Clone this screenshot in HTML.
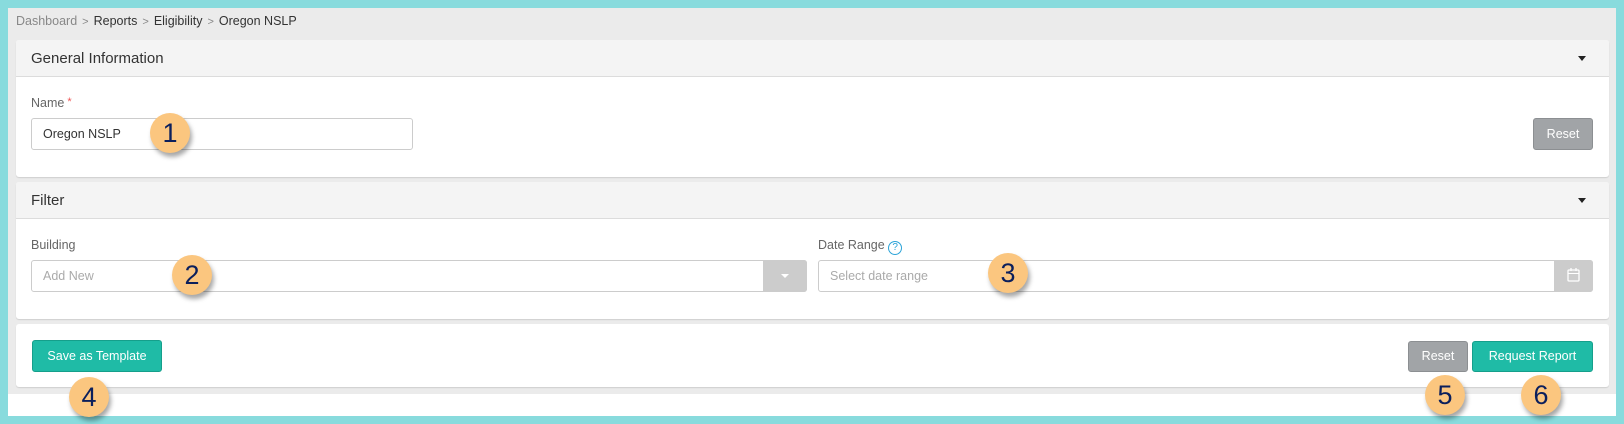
<!DOCTYPE html>
<html><head><style>
*{box-sizing:border-box;margin:0;padding:0}
body{width:1624px;height:424px;background:#88dbdd;font-family:"Liberation Sans",sans-serif;position:relative;overflow:hidden}
.page{position:absolute;left:8px;top:8px;width:1608px;height:408px;background:#fff}
.gray{position:absolute;left:8px;top:8px;width:1608px;height:386px;background:#ebebeb}
.bc{position:absolute;left:16px;top:14px;font-size:12.5px;color:#333}
.bc .d{color:#888}.bc .s{color:#888;margin:0 5px;font-size:11px}
.card{position:absolute;left:16px;width:1593px;background:#fff;border-radius:3px;box-shadow:0 1px 1px rgba(0,0,0,.12)}
.hd{height:37px;background:#f4f4f4;border-bottom:1px solid #dcdcdc;font-size:15px;color:#333;padding:10px 15px;position:relative;border-radius:3px 3px 0 0}
.hd:after{content:"";position:absolute;right:23px;top:16px;border:4px solid transparent;border-top:5px solid #222;border-bottom:0}
.abs{position:absolute}
.lbl{font-size:12.5px;color:#666}
.inp{border:1px solid #ccc;border-radius:3px;background:#fff;height:32px;font-size:12.5px;padding:8px 11px}
.btn{position:absolute;height:31px;border-radius:3px;color:#fff;font-size:12.5px;text-align:center;line-height:29px}
.gr{background:#a1a4a7;border:1px solid #8c8f92}
.tl{background:#1fbba6;border:1px solid #159f8b}
.b{position:absolute;width:40px;height:40px;border-radius:50%;background:#fbc67f;box-shadow:2px 4px 5px rgba(0,0,0,.35);color:#0b1f5c;font-size:27px;text-align:center;line-height:40px}
</style></head><body>
<div class="page"></div><div class="gray"></div>
<div class="bc"><span class="d">Dashboard</span><span class="s">&gt;</span>Reports<span class="s">&gt;</span>Eligibility<span class="s">&gt;</span>Oregon NSLP</div>

<div class="card" style="top:40px;height:137px"><div class="hd">General Information</div></div>
<div class="abs lbl" style="left:31px;top:96px">Name<span style="color:#e55;font-size:11px;vertical-align:top"> *</span></div>
<div class="abs inp" style="left:31px;top:118px;width:382px;color:#333">Oregon NSLP</div>
<div class="btn gr" style="left:1533px;top:118px;width:60px;height:32px;line-height:30px">Reset</div>

<div class="card" style="top:182px;height:137px"><div class="hd">Filter</div></div>
<div class="abs lbl" style="left:31px;top:238px">Building</div>
<div class="abs inp" style="left:31px;top:260px;width:776px;color:#aaa">Add New</div>
<div class="abs" style="left:763px;top:260px;width:44px;height:32px;background:#ccc;border-radius:0 3px 3px 0"><div style="position:absolute;left:18px;top:14px;border:4px solid transparent;border-top:4px solid #fff;border-bottom:0"></div></div>
<div class="abs lbl" style="left:818px;top:238px">Date Range <span style="display:inline-block;width:14px;height:14px;border:1px solid #2aa3d8;border-radius:50%;color:#2aa3d8;font-size:10px;line-height:12px;text-align:center;vertical-align:-1px">?</span></div>
<div class="abs inp" style="left:818px;top:260px;width:775px;color:#aaa">Select date range</div>
<div class="abs" style="left:1554px;top:260px;width:39px;height:32px;background:#ccc;border-radius:0 3px 3px 0">
<svg width="39" height="32"><rect x="14" y="10" width="11" height="11" rx="1" fill="none" stroke="#fff" stroke-width="1.3"/><line x1="14" y1="13.5" x2="25" y2="13.5" stroke="#fff"/><line x1="17" y1="8" x2="17" y2="11" stroke="#fff" stroke-width="1.3"/><line x1="22" y1="8" x2="22" y2="11" stroke="#fff" stroke-width="1.3"/></svg></div>

<div class="card" style="top:324px;height:63px"></div>
<div class="btn tl" style="left:32px;top:340px;width:130px;height:32px;line-height:30px">Save as Template</div>
<div class="btn gr" style="left:1408px;top:341px;width:60px">Reset</div>
<div class="btn tl" style="left:1472px;top:341px;width:121px">Request Report</div>

<div class="b" style="left:150px;top:113px">1</div>
<div class="b" style="left:172px;top:255px">2</div>
<div class="b" style="left:988px;top:253px">3</div>
<div class="b" style="left:69px;top:377px">4</div>
<div class="b" style="left:1425px;top:375px">5</div>
<div class="b" style="left:1521px;top:375px">6</div>
</body></html>
